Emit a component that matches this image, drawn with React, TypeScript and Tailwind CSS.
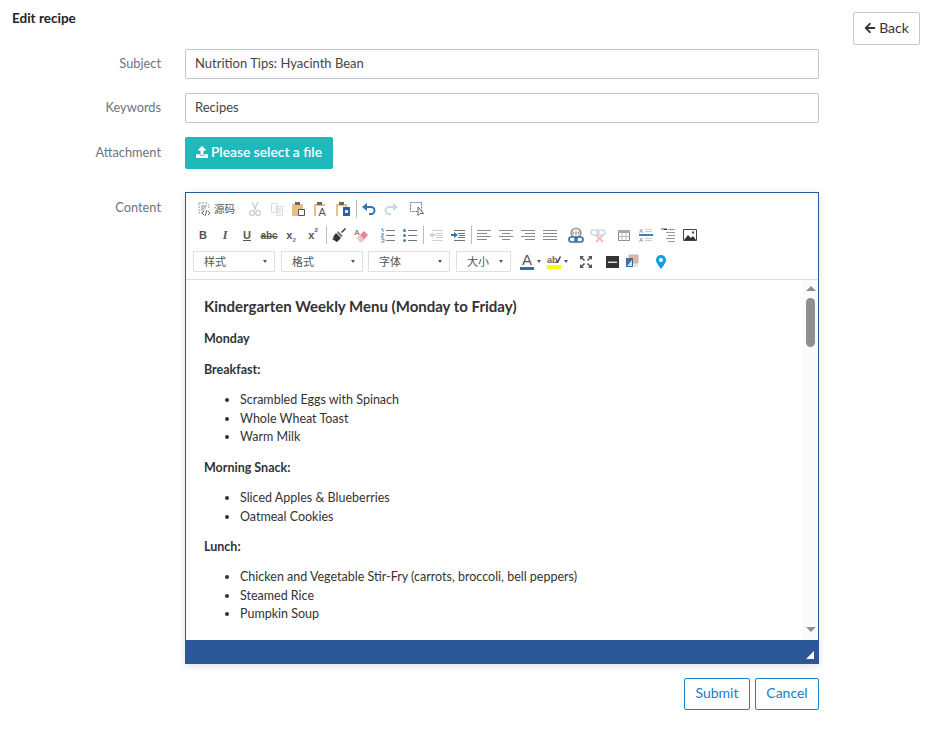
import * as React from "react"
import { FaArrowLeft, FaUpload } from "react-icons/fa"

const LIGHT = "#c9d3dc"
const BLUE = "#2f78b8"

function Slot({ children, className = "w-[22px]" }: { children?: React.ReactNode; className?: string }) {
  return <span className={"flex h-[18px] shrink-0 items-center justify-center " + className}>{children}</span>
}

function Sep() {
  return (
    <span className="flex h-[18px] w-[4px] shrink-0 justify-center">
      <span className="h-full w-px bg-[#bcbcbc]" />
    </span>
  )
}

function Ico({ children, w = 16, h = 16 }: { children: React.ReactNode; w?: number; h?: number }) {
  return (
    <svg width={w} height={h} viewBox={`0 0 ${w} ${h}`} fill="none">
      {children}
    </svg>
  )
}

// horizontal text-lines used by list, align and indent icons
function Lines({ rows, color = "#8a8a8a" }: { rows: [number, number, number][]; color?: string }) {
  return (
    <>
      {rows.map(([x1, x2, y], i) => (
        <path key={i} d={`M${x1} ${y}.5H${x2}`} stroke={color} />
      ))}
    </>
  )
}

function Clipboard({ children }: { children?: React.ReactNode }) {
  return (
    <Ico>
      <path d="M1 3h11v12H1z" fill="#e8bf85" />
      <path d="M4 1h5v3H4z" fill="#666" />
      {children}
    </Ico>
  )
}

function ComboBox({ label, className }: { label: string; className: string }) {
  return (
    <span className={"flex h-[21px] shrink-0 items-center justify-between border border-[#e0e0e0] bg-white pl-[10px] pr-[7px] text-[11px] text-[#555] " + className}>
      <span className="font-['Noto_Sans_CJK_SC',sans-serif]">{label}</span>
      <span className="h-0 w-0 border-x-[2px] border-t-[3px] border-x-transparent border-t-[#555]" />
    </span>
  )
}

function Toolbar() {
  return (
    <div className="h-[87px] border-b border-[#dedede] pl-[6px] pt-[7px]">
      <div className="flex h-[18px] items-center">
        <Slot className="w-[48px] justify-start">
          <span className="ml-[5px] mr-[3px]">
            <Ico w={14} h={16}>
              <path d="M2 2h8l2 2v3M2 2v10h3" stroke="#999" strokeDasharray="2 1" />
              <path d="M4 5h6M4 7h5M4 9h3" stroke="#888" />
              <path d="M7 10l-2 2 2 2M11 10l2 2-2 2M8 15l2-6" stroke="#666" />
            </Ico>
          </span>
          <span className="font-['Noto_Sans_CJK_SC',sans-serif] text-[10.5px] text-[#555]">源码</span>
        </Slot>
        <span className="w-[4px]" />
        <Slot>
          <Ico>
            <path d="M5 1l4 8M11 1L7 9" stroke={LIGHT} strokeWidth="1.5" />
            <circle cx="5" cy="12" r="2.4" stroke={LIGHT} strokeWidth="1.4" />
            <circle cx="11" cy="12" r="2.4" stroke={LIGHT} strokeWidth="1.4" />
          </Ico>
        </Slot>
        <Slot>
          <Ico>
            <path d="M2.5 2.5h6v9h-6zM7.5 5.5h6v9h-6z" fill="#fbfbfb" stroke="#dcdcdc" />
            <path d="M9 8h3M9 10h3M9 12h3" stroke="#dcdcdc" />
          </Ico>
        </Slot>
        <Slot>
          <Clipboard>
            <path d="M7.5 8.5h6v6h-6z" fill="#fff" stroke="#555" />
          </Clipboard>
        </Slot>
        <Slot>
          <Clipboard>
            <path d="M3 5h10v10H3z" fill="#fff" />
            <text x="5.5" y="15" fontSize="11" fill="#555" fontFamily="Liberation Sans">A</text>
          </Clipboard>
        </Slot>
        <Slot>
          <Clipboard>
            <path d="M3 5h7v10H3z" fill="#fff" />
            <path d="M8 6h7v9H8z" fill="#2f5f9e" />
            <path d="M10 9h3v3h-3z" fill="#dce6f2" />
          </Clipboard>
        </Slot>
        <Sep />
        <Slot>
          <Ico>
            <path d="M5 6h5a3.5 3.5 0 0 1 0 7H8" stroke={BLUE} strokeWidth="2" />
            <path d="M1 6l5-4v8z" fill={BLUE} />
          </Ico>
        </Slot>
        <Slot>
          <Ico>
            <path d="M11 6H6a3.5 3.5 0 0 0 0 7h2" stroke="#c5d8e8" strokeWidth="2" />
            <path d="M15 6l-5-4v8z" fill="#c5d8e8" />
          </Ico>
        </Slot>
        <span className="w-[4px]" />
        <Slot>
          <Ico>
            <rect x="1.5" y="1.5" width="11" height="9" stroke="#4a7fb5" strokeDasharray="2 1" />
            <path d="M9 6v8.5l2-2h3.5z" fill="#fff" stroke="#666" />
          </Ico>
        </Slot>
      </div>

      <div className="mt-[8px] flex h-[18px] items-center font-['Liberation_Sans',sans-serif] text-[#555]">
        <Slot><span className="text-[11px] font-bold">B</span></Slot>
        <Slot><span className="font-['Liberation_Serif',serif] text-[12px] font-bold italic">I</span></Slot>
        <Slot><span className="text-[11px] font-bold underline">U</span></Slot>
        <Slot><span className="text-[10px] font-bold line-through">abc</span></Slot>
        <Slot>
          <span className="text-[11px] font-bold">x<sub className="align-[-2px] text-[6px] text-[#4a7fb5]">2</sub></span>
        </Slot>
        <Slot>
          <span className="text-[11px] font-bold">x<sup className="align-[4px] text-[6px]">2</sup></span>
        </Slot>
        <Sep />
        <Slot>
          <Ico>
            <path d="M10 5l4-4 1 1-4 4z" fill="#333" />
            <path d="M7 4l5 5-2 1-4-4z" fill="#777" />
            <path d="M5 6l5 5-4 4-5-3 2-1-1-1z" fill="#333" />
          </Ico>
        </Slot>
        <Slot>
          <Ico>
            <path d="M4 11l7-7 4 4-6 7H7z" fill="#ea8597" />
            <path d="M4 11l3-3 4 4-2 3H7z" fill="#f5c3cd" />
            <text x="1" y="8" fontSize="8" fontWeight="700" fill="#888" fontFamily="Liberation Sans">A</text>
          </Ico>
        </Slot>
        <span className="w-[5px]" />
        <Slot>
          <Ico>
            <path d="M1 2h2v3M1 7h3L1 10h3M1 12h3v3H1" stroke="#4a7fb5" strokeWidth=".9" />
            <Lines rows={[[6, 15, 3], [6, 15, 8], [6, 15, 13]]} color="#777" />
          </Ico>
        </Slot>
        <Slot>
          <Ico>
            <circle cx="2.5" cy="3.5" r="1.5" fill="#4a7fb5" />
            <circle cx="2.5" cy="8.5" r="1.5" fill="#4a7fb5" />
            <circle cx="2.5" cy="13.5" r="1.5" fill="#4a7fb5" />
            <Lines rows={[[6, 15, 3], [6, 15, 8], [6, 15, 13]]} color="#777" />
          </Ico>
        </Slot>
        <Sep />
        <Slot>
          <Ico>
            <path d="M1 8l4-3v2h3v2H5v2z" fill="#c5d8e8" />
            <Lines rows={[[4, 15, 3], [8, 15, 6], [9, 15, 8], [8, 15, 10], [4, 15, 13]]} color="#d0d0d0" />
          </Ico>
        </Slot>
        <Slot>
          <Ico>
            <path d="M8 8L4 5v2H1v2h3v2z" fill={BLUE} />
            <Lines rows={[[4, 15, 3], [8, 15, 6], [9, 15, 8], [8, 15, 10], [4, 15, 13]]} color="#777" />
          </Ico>
        </Slot>
        <Sep />
        <Slot><Ico><Lines rows={[[1, 15, 3], [1, 11, 6], [1, 15, 9], [1, 11, 12]]} /></Ico></Slot>
        <Slot><Ico><Lines rows={[[1, 15, 3], [4, 12, 6], [1, 15, 9], [4, 12, 12]]} /></Ico></Slot>
        <Slot><Ico><Lines rows={[[1, 15, 3], [5, 15, 6], [1, 15, 9], [5, 15, 12]]} /></Ico></Slot>
        <Slot><Ico><Lines rows={[[1, 15, 3], [1, 15, 6], [1, 15, 9], [1, 15, 12]]} /></Ico></Slot>
        <span className="w-[4px]" />
        <Slot>
          <Ico>
            <circle cx="8" cy="6" r="5" stroke="#888" strokeWidth="1.2" />
            <path d="M3 6h10M8 1v10M5 2v8M11 2v8" stroke="#888" strokeWidth=".7" />
            <rect x="1" y="10" width="8" height="5" rx="2.5" stroke="#2f6ea8" strokeWidth="1.6" fill="#fff" />
            <rect x="7" y="10" width="8" height="5" rx="2.5" stroke="#2f6ea8" strokeWidth="1.6" />
          </Ico>
        </Slot>
        <Slot>
          <Ico>
            <rect x="1" y="3" width="8" height="5" rx="2.5" stroke="#c8dcec" strokeWidth="1.6" />
            <rect x="7" y="3" width="8" height="5" rx="2.5" stroke="#c8dcec" strokeWidth="1.6" />
            <path d="M6 8l7 7M13 8l-7 7" stroke="#f4bdb6" strokeWidth="1.8" />
          </Ico>
        </Slot>
        <span className="w-[4px]" />
        <Slot>
          <Ico>
            <path d="M2.5 3.5h11v10h-11z" fill="#fff" stroke="#888" />
            <path d="M2 3h12v3H2z" fill="#aaa" />
            <path d="M2 9.5h12M6 6v8M10 6v8" stroke="#bbb" />
          </Ico>
        </Slot>
        <Slot>
          <Ico>
            <path d="M1 7h14v2H1z" fill="#3f80bd" />
            <text x="1" y="6" fontSize="6" fontWeight="700" fill="#999" fontFamily="Liberation Sans">A</text>
            <text x="1" y="15" fontSize="6" fontWeight="700" fill="#999" fontFamily="Liberation Sans">A</text>
            <Lines rows={[[7, 14, 2], [7, 14, 4], [7, 14, 11], [7, 14, 13]]} color="#ccc" />
          </Ico>
        </Slot>
        <Slot>
          <Ico>
            <path d="M1 2h6" stroke="#555" />
            <path d="M4 2h3v1H4z" fill="#333" />
            <Lines rows={[[8, 15, 2], [6, 15, 5], [8, 15, 8], [6, 15, 11], [8, 15, 14]]} color="#999" />
          </Ico>
        </Slot>
        <Slot>
          <Ico>
            <path d="M1.5 2.5h13v11h-13z" fill="#fff" stroke="#444" />
            <path d="M2 13l4-5 3 3 2-2 3 4z" fill="#333" />
            <circle cx="11" cy="5.5" r="1.2" fill="#555" />
          </Ico>
        </Slot>
      </div>

      <div className="mt-[7px] flex h-[21px] items-center">
        <span className="w-px" />
        <ComboBox label="样式" className="w-[82px]" />
        <span className="w-[6px]" />
        <ComboBox label="格式" className="w-[82px]" />
        <span className="w-[5px]" />
        <ComboBox label="字体" className="w-[82px]" />
        <span className="w-[6px]" />
        <ComboBox label="大小" className="w-[55px]" />
        <span className="w-[6px]" />
        <Slot className="w-[27px] gap-[3px]">
          <span className="border-b-[3px] border-[#2f6ea8] px-[2px] font-['Liberation_Sans',sans-serif] text-[15px] leading-[14px] text-[#555]">A</span>
          <span className="h-0 w-0 border-x-[2px] border-t-[3px] border-x-transparent border-t-[#555]" />
        </Slot>
        <Slot className="w-[26px] gap-[3px]">
          <span className="flex flex-col">
            <Ico w={14} h={11}>
              <text x="0" y="9" fontSize="9" fontWeight="700" fill="#666" fontFamily="Liberation Sans">ab</text>
              <path d="M9 9l4-7 1 1-3 6z" fill="#444" />
            </Ico>
            <span className="h-[4px] w-[14px] bg-[#ffff00]" />
          </span>
          <span className="h-0 w-0 border-x-[2px] border-t-[3px] border-x-transparent border-t-[#555]" />
        </Slot>
        <span className="w-[5px]" />
        <Slot>
          <Ico>
            <path d="M3 3l3.5 3.5M13 3L9.5 6.5M3 13l3.5-3.5M13 13L9.5 9.5" stroke="#555" strokeWidth="1.6" />
            <path d="M2 2h4L2 6zM14 2h-4l4 4zM2 14h4l-4-4zM14 14h-4l4-4z" fill="#555" />
          </Ico>
        </Slot>
        <span className="w-[4px]" />
        <Slot>
          <Ico w={14} h={14}>
            <path d="M1 1h13v12H1z" fill="#333" />
            <path d="M3 6.5h9v1.5H3z" fill="#ddd" />
          </Ico>
        </Slot>
        <Slot className="ml-[-2px] w-[22px]">
          <span className="mb-[2px]">
            <Ico w={14} h={14}>
              <path d="M4 1h9v8H4z" fill="#e9b3a0" stroke="#bbb" />
              <path d="M1 4h7v9H1z" fill="#3a6ea8" />
              <path d="M2 12l5-6v6z" fill="#cfe0f0" />
              <path d="M8 10h5M8 12h5" stroke="#ccc" />
            </Ico>
          </span>
        </Slot>
        <span className="w-[7px]" />
        <Slot>
          <Ico>
            <path fillRule="evenodd" d="M8 1a5 5 0 0 1 5 5c0 3.4-5 9-5 9S3 9.4 3 6a5 5 0 0 1 5-5zm0 3a2 2 0 1 0 0 4 2 2 0 0 0 0-4z" fill="#0d9fe3" />
          </Ico>
        </Slot>
      </div>
    </div>
  )
}

function BulletList({ items }: { items: string[] }) {
  return (
    <ul className="my-[12px] list-disc pl-[36px] leading-[18.6px]">
      {items.map((t) => (
        <li key={t}>{t}</li>
      ))}
    </ul>
  )
}

function Content() {
  return (
    <div className="flex h-[360px] overflow-hidden">
      <div className="min-w-0 flex-1 overflow-hidden pl-[18px] pr-2 pt-[15px] font-['Lato',sans-serif] text-[12.5px] text-[#333]">
        <h3 className="mb-[13.3px] text-[15px] font-bold leading-[22px]">Kindergarten Weekly Menu (Monday to Friday)</h3>
        <p className="mb-[13px] mt-[12px] font-bold leading-[18px]">Monday</p>
        <p className="my-[12px] font-bold leading-[18px]">Breakfast:</p>
        <BulletList items={["Scrambled Eggs with Spinach", "Whole Wheat Toast", "Warm Milk"]} />
        <p className="my-[12px] font-bold leading-[18px]">Morning Snack:</p>
        <BulletList items={["Sliced Apples & Blueberries", "Oatmeal Cookies"]} />
        <p className="my-[12px] font-bold leading-[18px]">Lunch:</p>
        <BulletList items={["Chicken and Vegetable Stir-Fry (carrots, broccoli, bell peppers)", "Steamed Rice", "Pumpkin Soup"]} />
      </div>
      <div className="flex w-[15px] shrink-0 flex-col items-center bg-[#fafafa] pt-[6px]">
        <span className="h-0 w-0 border-x-[5px] border-b-[5px] border-x-transparent border-b-[#8f8f8f]" />
        <span className="mt-[7px] h-[49px] w-[9px] rounded-full bg-[#8f8f8f]" />
        <span className="mt-[280px] h-0 w-0 border-x-[5px] border-t-[5px] border-x-transparent border-t-[#8f8f8f]" />
      </div>
    </div>
  )
}

function Row({ label, className, labelClass = "", children }: { label: string; className: string; labelClass?: string; children: React.ReactNode }) {
  return (
    <div className={"flex " + className}>
      <label className={"w-[161px] shrink-0 text-right text-[12.8px] text-[#6c757d] " + labelClass}>{label}</label>
      <div className="ml-[24px] w-[634px]">{children}</div>
    </div>
  )
}

export default function App() {
  return (
    <div className="h-[734px] w-[926px] overflow-hidden bg-white font-['Lato',sans-serif] text-[#212529]">
      <div className="flex h-[49px] items-start justify-between pl-3 pr-[6px] pt-3">
        <h1 className="text-[13.5px] font-bold leading-[13px]">Edit recipe</h1>
        <button className="flex h-[33px] w-[67px] items-center justify-center gap-[3px] rounded-[2px] border border-[#c8c8c8] pb-[2px] text-[14px] text-[#333]">
          <FaArrowLeft size={12} />
          Back
        </button>
      </div>

      <Row label="Subject" className="h-[30px] items-center">
        <input readOnly value="Nutrition Tips: Hyacinth Bean" className="h-[30px] w-full rounded-[2px] border border-[#bcc8d8] px-[9px] pb-[3px] text-[13px] text-[#444]" />
      </Row>
      <Row label="Keywords" className="mt-[14px] h-[30px] items-center">
        <input readOnly value="Recipes" className="h-[30px] w-full rounded-[2px] border border-[#bcc8d8] px-[9px] pb-[3px] text-[13px] text-[#444]" />
      </Row>
      <Row label="Attachment" labelClass="pb-[1px]" className="mt-[14px] h-[32px] items-center">
        <button className="flex h-[32px] w-[148px] items-center justify-center gap-[3px] rounded-[2px] bg-[#20b9bb] pb-[2px] text-[13.8px] font-semibold text-white">
          <FaUpload size={12} />
          Please select a file
        </button>
      </Row>
      <Row label="Content" labelClass="pt-[6px]" className="mt-[23px]">
        <div className="border border-[#2b5797] shadow-[0_2px_8px_rgba(0,0,0,0.12)]">
          <Toolbar />
          <Content />
          <div className="relative h-[23px] bg-[#2b5797]">
            <span className="absolute bottom-[4px] right-[4px] h-0 w-0 border-b-[8px] border-l-[8px] border-b-white border-l-transparent" />
          </div>
        </div>
        <div className="mt-[14px] flex justify-end gap-[5px]">
          <button className="h-[32px] w-[66px] rounded-[2px] border border-[#1a84cc] pb-[3px] text-[14px] text-[#1a7cc4]">Submit</button>
          <button className="h-[32px] w-[64px] rounded-[2px] border border-[#1a84cc] pb-[3px] text-[14px] text-[#1a7cc4]">Cancel</button>
        </div>
      </Row>
    </div>
  )
}
